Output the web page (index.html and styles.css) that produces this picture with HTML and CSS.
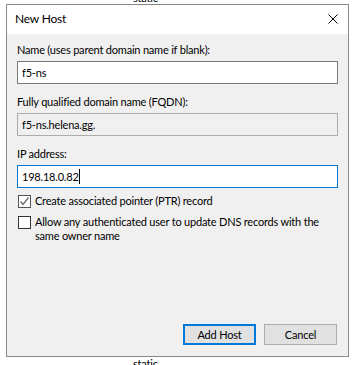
FILE: index.html
```html
<!DOCTYPE html>
<html lang="en">
<head>
  <meta charset="UTF-8" />
  <title>New Host</title>
  <link rel="stylesheet" href="styles.css">
</head>
<body>
  <div class="static-top">static</div>

  <!-- Dialog -->
  <div class="dialog">
    <div class="title-bar">
      <span class="title">New Host</span>
      <svg class="close" width="10" height="10" viewBox="0 0 10 10">
        <path d="M0.5 0.5 L9.5 9.5 M9.5 0.5 L0.5 9.5" stroke="#000" stroke-width="1" fill="none"/>
      </svg>
    </div>

    <div class="dialog-body">
      <label class="field-label" for="name">Name (uses parent domain name if blank):</label>
      <input class="text-box" type="text" id="name" value="f5-ns">

      <label class="field-label" for="fqdn">Fully qualified domain name (FQDN):</label>
      <input class="text-box readonly" type="text" id="fqdn" value="f5-ns.helena.gg." readonly>

      <label class="field-label" for="ip">IP address:</label>
      <div class="text-box focused">198.18.0.82<span class="caret"></span></div>

      <div class="check-row first">
        <span class="check-box checked">
          <svg width="11" height="11" viewBox="0 0 11 11">
            <path d="M1.5 5.5 L4 8.5 L9.5 1.5" stroke="#6a6a6a" stroke-width="1.3" fill="none"/>
          </svg>
        </span>
        <span>Create associated pointer (PTR) record</span>
      </div>
      <div class="check-row">
        <span class="check-box"></span>
        <span>Allow any authenticated user to update DNS records with the same owner name</span>
      </div>

      <div class="buttons">
        <button class="btn default">Add Host</button>
        <button class="btn">Cancel</button>
      </div>
    </div>
  </div>

  <div class="static-bottom">static</div>
</body>
</html>
```

FILE: styles.css
```css
* {
  box-sizing: border-box;
  margin: 0;
  padding: 0;
}

body {
  background: #fff;
  font-family: "Lato", "Open Sans", sans-serif;
  font-size: 11px;
  letter-spacing: -0.2px;
  color: #000;
  overflow: hidden;
}

.static-top,
.static-bottom {
  padding-left: 133px;
  line-height: 12px;
  height: 12px;
}

.static-top {
  margin-top: -8px;
}

.static-bottom {
  margin-top: 1px;
}

/*********DIALOG***********/
.dialog {
  margin-left: 6px;
  width: 343px;
  height: 353px;
  border: 1px solid #888;
  display: flex;
  flex-direction: column;
}

.title-bar {
  height: 29px;
  background: #fff;
  display: flex;
  align-items: center;
  justify-content: space-between;
  padding: 0 10px 2px 8px;
}

.title {
  font-size: 12px;
}

.dialog-body {
  flex: 1;
  background: #f0f0f0;
  padding: 8px 10px 11px 10px;
  display: flex;
  flex-direction: column;
}

.field-label {
  display: block;
  line-height: 16px;
  margin-bottom: 3px;
}

.text-box {
  width: 100%;
  height: 23px;
  border: 1px solid #7a7a7a;
  background: #fff;
  font: inherit;
  letter-spacing: inherit;
  padding: 0 4px;
  margin-bottom: 10px;
  outline: none;
  display: flex;
  align-items: center;
}

.text-box.readonly {
  background: #f0f0f0;
  border-color: #adadad;
}

.text-box.focused {
  border-color: #0078d7;
  margin-bottom: 6px;
}

.caret {
  display: inline-block;
  width: 1px;
  height: 15px;
  background: #000;
}

/*********CHECKBOXES***********/
.check-row {
  display: flex;
  align-items: flex-start;
  gap: 4px;
  line-height: 14px;
  padding-left: 1px;
  margin-bottom: 7px;
}

.check-box {
  flex: none;
  width: 13px;
  height: 13px;
  border: 1px solid #333;
  background: #fff;
  margin-top: 1px;
  display: flex;
  align-items: center;
  justify-content: center;
}

.check-box.checked {
  border-color: #555;
}

/*********BUTTONS***********/
.buttons {
  margin-top: auto;
  display: flex;
  justify-content: flex-end;
  gap: 8px;
  padding-right: 1px;
}

.btn {
  width: 73px;
  height: 21px;
  background: #e1e1e1;
  border: 1px solid #adadad;
  font: inherit;
  letter-spacing: inherit;
  color: #000;
}

.btn.default {
  border: 2px solid #0078d7;
}
```
